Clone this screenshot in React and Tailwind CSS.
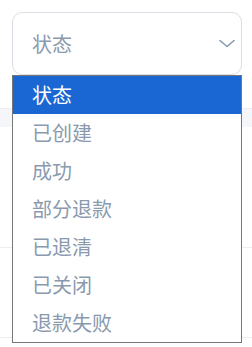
import React from 'react';

const options = ['状态', '已创建', '成功', '部分退款', '已退清', '已关闭', '退款失败'];

const font = { fontFamily: '"Noto Sans CJK SC", "Noto Sans", sans-serif' };

const App = () => {
  return (
    <div className="relative w-[252px] h-[347px] bg-white overflow-hidden" style={font}>
      {/* select box */}
      <div className="pt-3 pl-3 pr-[10px]">
        <div className="h-[63px] border border-[#dadee4] rounded-[10px] flex items-center justify-between pl-[19px] pr-[6px]">
          <span className="text-[20px] leading-none text-[#8a9aae]">状态</span>
          <svg width="16" height="9" viewBox="0 0 16 9" fill="none">
            <path d="M1 1.5 L8 7.5 L15 1.5" stroke="#8a9aae" strokeWidth="1.6" strokeLinecap="round" strokeLinejoin="round" />
          </svg>
        </div>
      </div>

      {/* page content behind the menu */}
      <div className="mt-[33px] h-[19px] bg-[#f5f6f9] border-t border-[#eceef2]" />
      <div className="mt-[120px] h-px bg-[#eceef1]" />
      <div className="mt-[89px] h-px bg-[#eceef1]" />

      {/* open menu */}
      <div className="absolute top-[75px] left-3 w-[230px] border border-[#767676] bg-white">
        {options.map((o, i) => (
          <div
            key={o}
            className={
              'h-[38px] flex items-center pl-[19px] text-[20px] leading-none ' +
              (i === 0 ? 'bg-[#1a67d3] text-white' : 'text-[#8a9aae]')
            }
          >
            {o}
          </div>
        ))}
      </div>
    </div>
  );
};

export default App;
